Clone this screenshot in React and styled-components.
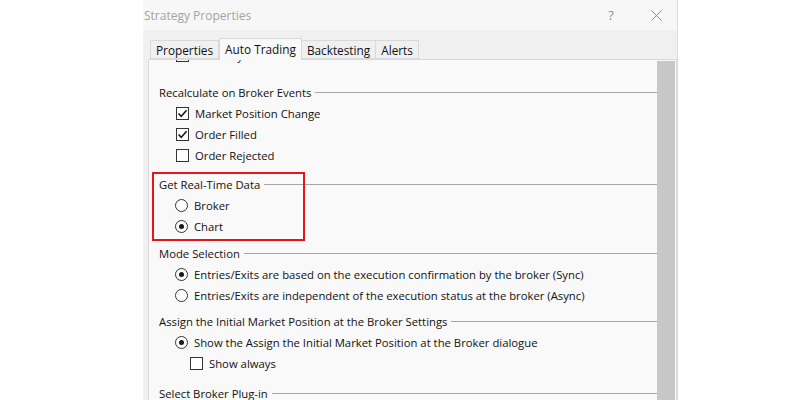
import React from "react";
import styled, { createGlobalStyle } from "styled-components";

const Global = createGlobalStyle`
  html, body { margin: 0; padding: 0; background: #ffffff; }
  body { font-family: "Open Sans", "Noto Sans", sans-serif; }
  #root { width: 800px; height: 400px; overflow: hidden; }
`;

const Page = styled.div`
  width: 800px;
  height: 400px;
  display: flex;
  padding-left: 143px;
  box-sizing: border-box;
  overflow: hidden;
`;

const Window = styled.div`
  width: 535px;
  height: 400px;
  background: #f0f0f0;
  border-right: 1px solid #dcdcdc;
  display: flex;
  flex-direction: column;
  box-sizing: border-box;
`;

const TitleBar = styled.div`
  height: 30px;
  flex: none;
  background: #f7f7f7;
  display: flex;
  align-items: center;
  padding-left: 1px;
  color: #a3a3a3;
  font-size: 12px;
`;

const TitleText = styled.span`
  flex: 1;
`;

const TitleButton = styled.span`
  width: ${(p) => p.$w}px;
  margin-left: ${(p) => p.$ml ?? 0}px;
  color: #8e8e8e;
  font-size: ${(p) => p.$size}px;
  display: flex;
  justify-content: center;
  align-items: center;
`;

const TabStrip = styled.div`
  height: 29px;
  flex: none;
  display: flex;
  align-items: flex-end;
  padding-left: 7px;
`;

const Tab = styled.div`
  height: ${(p) => (p.$active ? 22 : 19)}px;
  padding: 0 5px;
  margin-bottom: ${(p) => (p.$active ? -1 : 0)}px;
  box-sizing: border-box;
  border: 1px solid #d9d9d9;
  border-bottom: ${(p) => (p.$active ? "none" : "1px solid #d9d9d9")};
  border-left: ${(p) => (p.$first || p.$active ? "1px solid #d9d9d9" : "none")};
  background: ${(p) => (p.$active ? "#f9f9f9" : "#f0f0f0")};
  font-size: 11.8px;
  color: #111;
  display: flex;
  align-items: ${(p) => (p.$active ? "flex-start" : "center")};
  padding-top: ${(p) => (p.$active ? 2 : 0)}px;
  position: relative;
  z-index: ${(p) => (p.$active ? 2 : 1)};
`;

const Panel = styled.div`
  margin-left: 5px;
  width: 529px;
  flex: 1;
  min-height: 0;
  border: 1px solid #d9d9d9;
  border-bottom: none;
  background: #f9f9f9;
  display: flex;
  box-sizing: border-box;
`;

const ScrollArea = styled.div`
  flex: 1;
  overflow: hidden;
  position: relative;
`;

const Inner = styled.div`
  margin-top: -37px;
  padding-left: 10px;
  position: relative;
`;

const ScrollTrack = styled.div`
  width: 19px;
  flex: none;
  padding: 1px 1px 0 0;
  box-sizing: border-box;
  display: flex;
`;

const ScrollThumb = styled.div`
  flex: 1;
  background: #c7c7c7;
`;

const Group = styled.div`
  margin-bottom: ${(p) => p.$gap ?? 6}px;
`;

const GroupTitle = styled.div`
  height: 22px;
  display: flex;
  align-items: center;
  font-size: 11.3px;
  color: #111;
  white-space: nowrap;
  &::after {
    content: "";
    flex: 1;
    height: 1px;
    background: #a6a6a6;
    margin-left: 4px;
  }
`;

const Item = styled.div`
  height: 21px;
  display: flex;
  align-items: center;
  padding-left: ${(p) => p.$indent}px;
  font-size: 11.3px;
  color: #111;
  white-space: nowrap;
  gap: ${(p) => p.$gap}px;
`;

const Box = styled.span`
  width: 13px;
  height: 13px;
  box-sizing: border-box;
  border: 1px solid #333;
  background: #fff;
  display: flex;
  align-items: center;
  justify-content: center;
  flex: none;
`;

const Round = styled.span`
  width: 13px;
  height: 13px;
  box-sizing: border-box;
  border: 1px solid #333;
  border-radius: 50%;
  background: #fff;
  display: flex;
  align-items: center;
  justify-content: center;
  flex: none;
  &::after {
    content: "";
    width: 5px;
    height: 5px;
    border-radius: 50%;
    background: ${(p) => (p.$on ? "#1a1a1a" : "transparent")};
  }
`;

const Highlight = styled.div`
  position: absolute;
  left: 3px;
  top: 149px;
  width: 153px;
  height: 69px;
  border: 2px solid #e8141b;
  box-sizing: border-box;
  pointer-events: none;
`;

const Check = () => (
  <svg width="11" height="11" viewBox="0 0 11 11">
    <path d="M1.5 5.5 L4.2 8.3 L9.6 2.2" fill="none" stroke="#1a1a1a" strokeWidth="1.6" />
  </svg>
);

const CheckItem = ({ on, label, indent = 17 }) => (
  <Item $indent={indent} $gap={6}>
    <Box>{on && <Check />}</Box>
    {label}
  </Item>
);

const RadioItem = ({ on, label, indent = 16 }) => (
  <Item $indent={indent} $gap={6}>
    <Round $on={on} />
    {label}
  </Item>
);

export default function App() {
  return (
    <>
      <Global />
      <Page>
        <Window>
          <TitleBar>
            <TitleText>Strategy Properties</TitleText>
            <TitleButton $w={20} $size={13}>?</TitleButton>
            <TitleButton $w={42} $ml={14} $size={16}>
              <svg width="11" height="11" viewBox="0 0 11 11">
                <path d="M0.5 0.5 L10.5 10.5 M10.5 0.5 L0.5 10.5" stroke="#8a8a8a" strokeWidth="1" />
              </svg>
            </TitleButton>
          </TitleBar>
          <TabStrip>
            <Tab $first>Properties</Tab>
            <Tab $active>Auto Trading</Tab>
            <Tab>Backtesting</Tab>
            <Tab>Alerts</Tab>
          </TabStrip>
          <Panel>
            <ScrollArea>
              <Inner>
                <Group $gap={15}>
                  <GroupTitle>Broker Notifications</GroupTitle>
                  <CheckItem on={false} label="Manually confirm orders" />
                </Group>
                <Group $gap={7}>
                  <GroupTitle>Recalculate on Broker Events</GroupTitle>
                  <CheckItem on label="Market Position Change" />
                  <CheckItem on label="Order Filled" />
                  <CheckItem on={false} label="Order Rejected" />
                </Group>
                <Group $gap={5}>
                  <GroupTitle>Get Real-Time Data</GroupTitle>
                  <RadioItem on={false} label="Broker" />
                  <RadioItem on label="Chart" />
                </Group>
                <Group $gap={4}>
                  <GroupTitle>Mode Selection</GroupTitle>
                  <RadioItem on label="Entries/Exits are based on the execution confirmation by the broker (Sync)" />
                  <RadioItem on={false} label="Entries/Exits are independent of the execution status at the broker (Async)" />
                </Group>
                <Group $gap={8}>
                  <GroupTitle>Assign the Initial Market Position at the Broker Settings</GroupTitle>
                  <RadioItem on label="Show the Assign the Initial Market Position at the Broker dialogue" />
                  <CheckItem on={false} indent={31} label="Show always" />
                </Group>
                <Group>
                  <GroupTitle>Select Broker Plug-in</GroupTitle>
                </Group>
                <Highlight />
              </Inner>
            </ScrollArea>
            <ScrollTrack>
              <ScrollThumb />
            </ScrollTrack>
          </Panel>
        </Window>
      </Page>
    </>
  );
}
